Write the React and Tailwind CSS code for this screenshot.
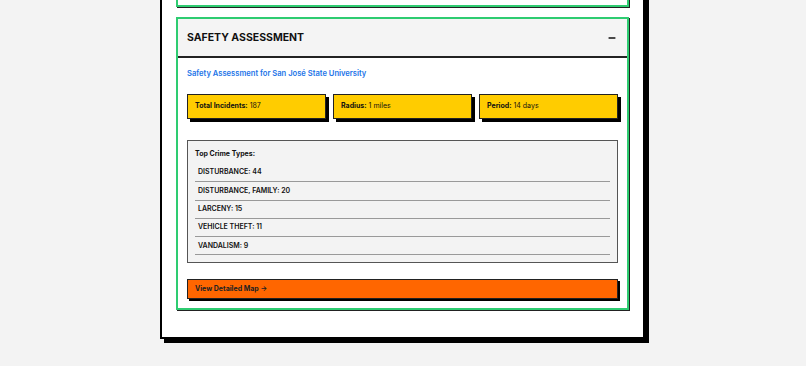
import { Minus } from "lucide-react";

const stats = [
  ["Total Incidents:", "187"],
  ["Radius:", "1 miles"],
  ["Period:", "14 days"],
];

const crimes = [
  ["DISTURBANCE", 44],
  ["DISTURBANCE, FAMILY", 20],
  ["LARCENY", 15],
  ["VEHICLE THEFT", 11],
  ["VANDALISM", 9],
];

export default function App() {
  return (
    <div className="w-[806px] h-[366px] overflow-hidden bg-[#f3f3f3] font-['Inter',sans-serif] text-[#111]">
      <div className="ml-[160px] mt-[-209px] w-[485px] bg-white border-2 border-black shadow-[4px_4px_0_#000] px-[14px] pt-[14px] pb-[27px]">
        {/* previous section, scrolled out of view */}
        <div className="h-[200px] mb-[10px] border-2 border-[#2ecc71] shadow-[1px_1px_0_#222] bg-white" />

        {/* Safety assessment */}
        <div className="border-2 border-[#2ecc71] shadow-[1px_1px_0_#222] bg-white">
          <div className="h-[39px] bg-[#f4f4f4] border-b-2 border-[#222] flex items-center justify-between pl-[9px] pr-[10px]">
            <h2 className="text-[10.5px] font-bold">SAFETY ASSESSMENT</h2>
            <Minus className="w-[10px] h-[10px]" strokeWidth={3.5} />
          </div>

          <div className="px-[9px] pt-[11px] pb-[9px]">
            <p className="text-[7.6px] leading-[10px] font-semibold text-[#1a73e8]">
              Safety Assessment for San José State University
            </p>

            <div className="grid grid-cols-3 gap-[7px] mt-[15px]">
              {stats.map(([label, value]) => (
                <div
                  key={label}
                  className="h-[25px] flex items-center px-[7px] bg-[#ffcc00] border border-[#222] shadow-[3px_3px_0_#000] text-[7px]"
                >
                  <span className="font-bold mr-[2px]">{label}</span>
                  <span>{value}</span>
                </div>
              ))}
            </div>

            <div className="mt-[21px] bg-[#f3f3f3] border border-[#555] px-[7px] pt-[8px] pb-[7px]">
              <div className="text-[7px] leading-[10px] font-bold mb-[5px]">Top Crime Types:</div>
              {crimes.map(([name, n]) => (
                <div
                  key={name}
                  className="h-[18.3px] flex items-center pl-[3px] border-b border-[#999] text-[7px] font-semibold"
                >
                  {name}: {n}
                </div>
              ))}
            </div>

            <button className="mt-[16px] w-full h-[20px] flex items-center px-[7px] bg-[#ff6600] border border-[#222] shadow-[2px_2px_0_#000] text-[7px] font-bold text-[#222]">
              View Detailed Map →
            </button>
          </div>
        </div>
      </div>
    </div>
  );
}
